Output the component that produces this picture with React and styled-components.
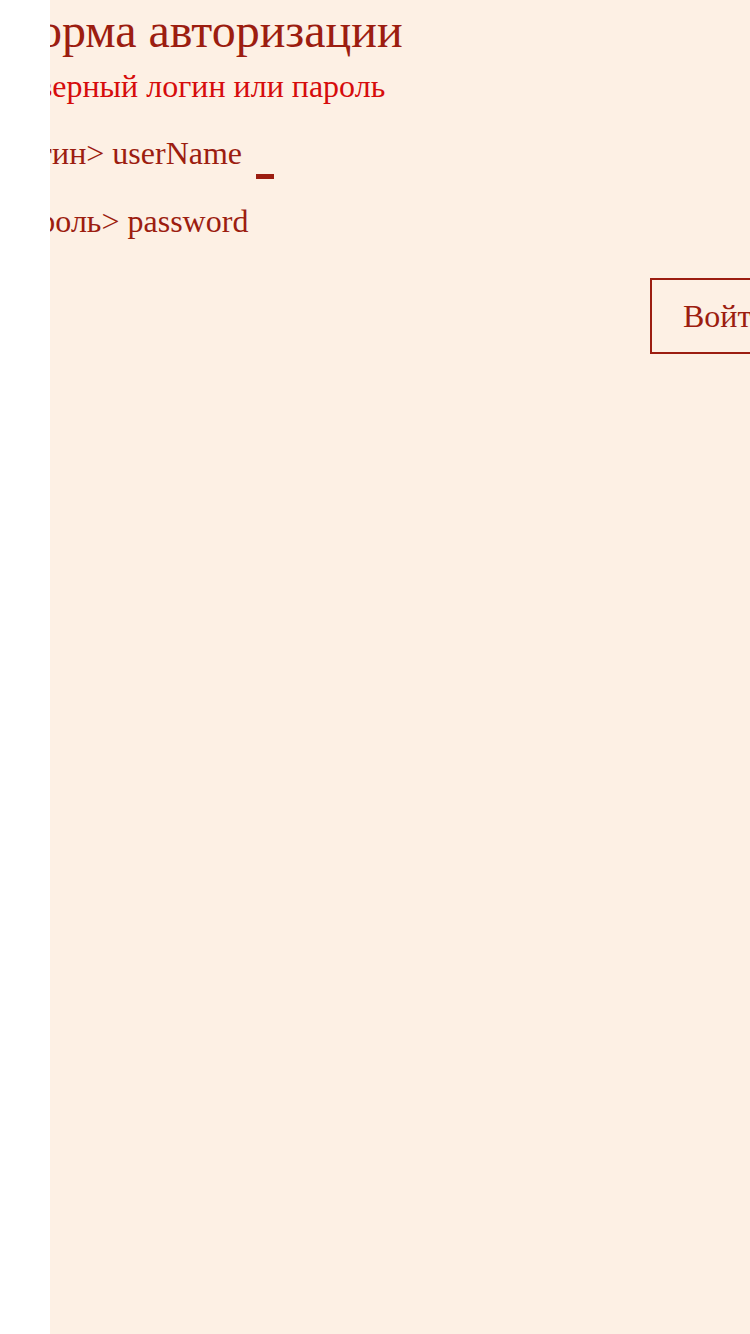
import React from 'react';
import styled, { createGlobalStyle } from 'styled-components';

const GlobalStyle = createGlobalStyle`
  html, body {
    margin: 0;
    padding: 0;
    background: #ffffff;
  }
  #root {
    min-height: 100vh;
  }
`;

const Page = styled.div`
  display: flex;
  min-height: 100vh;
  font-family: "Liberation Serif", "Times New Roman", serif;
`;

const Gutter = styled.div`
  flex: 0 0 50px;
  background: #ffffff;
`;

const Panel = styled.main`
  flex: 1;
  min-width: 0;
  overflow: hidden;
  background: #fdf0e4;
`;

const Form = styled.form`
  margin-left: -50px;
  width: 840px;
  display: flex;
  flex-direction: column;
`;

const Title = styled.h1`
  margin: 0;
  font-size: 48px;
  font-weight: normal;
  line-height: 62px;
  color: #9c1d10;
`;

const ErrorText = styled.p`
  margin: 0;
  font-size: 32px;
  line-height: 48px;
  color: #d60c0c;
`;

const Fields = styled.div`
  margin-top: 9px;
  padding-left: 2px;
  display: flex;
  flex-direction: column;
`;

const Field = styled.div`
  display: flex;
  align-items: baseline;
  font-size: 32px;
  line-height: 68px;
  color: #9c1d10;
  white-space: pre;
`;

const Cursor = styled.span`
  display: inline-block;
  width: 18px;
  height: 5px;
  margin-left: 14px;
  background: #9c1d10;
  align-self: flex-end;
  margin-bottom: 8px;
`;

const Actions = styled.div`
  display: flex;
  padding-left: 650px;
  margin-top: 23px;
`;

const Button = styled.button`
  font-family: inherit;
  font-size: 32px;
  line-height: 36px;
  color: #9c1d10;
  background: transparent;
  border: 2px solid #9c1d10;
  padding: 18px 30px 18px 31px;
  white-space: nowrap;
`;

export default function App() {
  return (
    <>
      <GlobalStyle />
      <Page>
        <Gutter />
        <Panel>
          <Form onSubmit={(e) => e.preventDefault()}>
            <Title>Форма авторизации</Title>
            <ErrorText>Неверный логин или пароль</ErrorText>
            <Fields>
              <Field>
                <span>Логин&gt; userName</span>
                <Cursor />
              </Field>
              <Field>
                <span>Пароль&gt; password</span>
              </Field>
            </Fields>
            <Actions>
              <Button type="submit">Войти</Button>
            </Actions>
          </Form>
        </Panel>
      </Page>
    </>
  );
}
